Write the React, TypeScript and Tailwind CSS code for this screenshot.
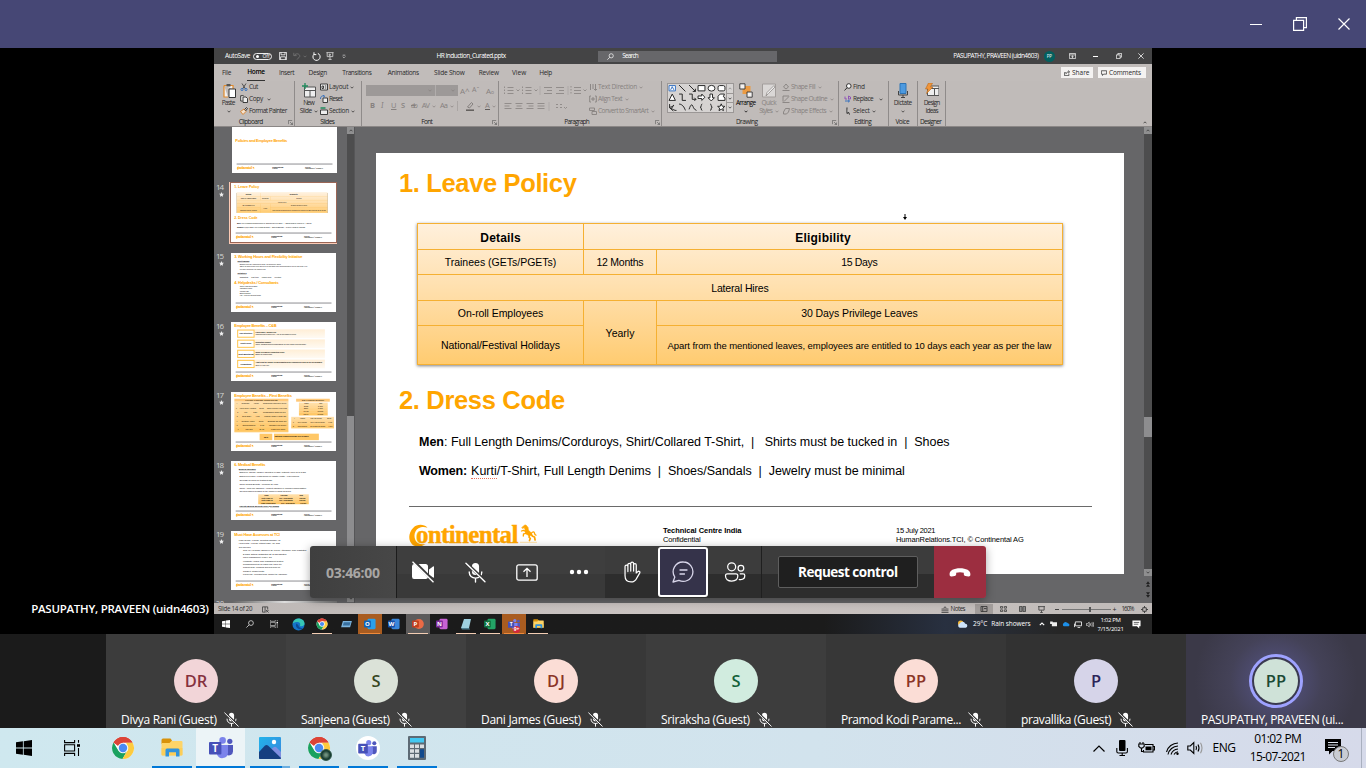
import { useLayoutEffect, useRef, useState, type ReactNode } from "react";

/* Label set to a fixed measure: the tracking is derived from the natural width. */
function Fit({ w, t, className = "" }: { w: number; t: string; className?: string }) {
  const ref = useRef<HTMLSpanElement>(null);
  const [s, setS] = useState<number | null>(null);
  useLayoutEffect(() => {
    if (ref.current && s === null) setS((w - ref.current.offsetWidth) / Math.max(1, t.length - 1));
  }, [s, w, t]);
  return (
    <span
      ref={ref}
      className={"inline-block shrink-0 whitespace-pre " + className}
      style={s === null ? undefined : { letterSpacing: s + "px", marginRight: -s + "px" }}
    >
      {t}
    </span>
  );
}

function Chev({ className = "" }: { className?: string }) {
  return (
    <svg viewBox="0 0 6 4" className={"h-[3px] w-[4px] shrink-0 " + className} fill="none" stroke="currentColor" strokeWidth="1.1">
      <path d="M.8 .8 3 3 5.2 .8" />
    </svg>
  );
}

/* ---------- shared logos ---------- */
function WinLogo({ className, fill = "#000" }: { className: string; fill?: string }) {
  return (
    <svg viewBox="0 0 16 16" className={className} fill={fill}>
      <path d="M0 2.3 6.9 1.3v6.3H0zM7.7 1.2 16 0v7.6H7.7zM0 8.4h6.9v6.3L0 13.7zM7.7 8.4H16V16l-8.3-1.2z" />
    </svg>
  );
}
function Chrome({ className }: { className: string }) {
  return (
    <svg viewBox="0 0 24 24" className={className}>
      <circle cx="12" cy="12" r="11" fill="#fff" />
      <path d="M12 12 2.5 6.5A11 11 0 0 1 21.5 6.5H12z" fill="#dc4437" />
      <path d="M2.5 6.5A11 11 0 0 0 11.5 23L16.2 14.8 12 12 7.5 14.8z" fill="#1aa15f" />
      <path d="M21.5 6.5A11 11 0 0 1 11.5 23l4.9-8.5L17 12l-2-5.5z" fill="#fdcb3f" />
      <path d="M2.5 6.5A11 11 0 0 1 21.5 6.5H12A5.5 5.5 0 0 0 7 10z" fill="#dc4437" />
      <circle cx="12" cy="12" r="5.3" fill="#f4f6f8" />
      <circle cx="12" cy="12" r="4.2" fill="#4a8af4" />
    </svg>
  );
}
function Folder({ className }: { className: string }) {
  return (
    <svg viewBox="0 0 22 20" className={className}>
      <path d="M.5 2Q.5.5 2 .5h7.5l1.5 2V6H.5z" fill="#d8920a" />
      <path d="M.5 5h8l2-2h10q1 0 1 1v12.5q0 1-1 1h-19q-1 0-1-1z" fill="#fdd468" />
      <path d="M.5 10h21v6.5q0 1-1 1h-19q-1 0-1-1z" fill="#fbc94e" opacity=".6" />
      <path d="M4.5 12q0-1.5 1.5-1.5h11q1.5 0 1.5 1.5v6.5h-3.500v-4.300h-7v4.300H4.500z" fill="#3193dc" />
    </svg>
  );
}
function Teams({ className }: { className: string }) {
  return (
    <svg viewBox="0 0 24 22" className={className}>
      <circle cx="20.8" cy="4.3" r="2.6" fill="#4f57bd" />
      <circle cx="13.6" cy="3.4" r="3.3" fill="#7b83eb" />
      <path d="M17.5 8H24v6.5a4 4 0 0 1-6.5 3z" fill="#4f57bd" />
      <path d="M8 8h11v8a5.7 5.7 0 0 1-11 1.5z" fill="#7b83eb" />
      <rect x="0" y="5" width="12.4" height="12.4" rx="1" fill="#4650b8" />
      <text x="6.2" y="14.7" fontSize="10" fontWeight="bold" fill="#fff" textAnchor="middle" fontFamily="Open Sans, sans-serif">T</text>
    </svg>
  );
}
function TaskView({ className, color = "#000" }: { className: string; color?: string }) {
  return (
    <svg viewBox="0 0 16 16" className={className} fill="none" stroke={color} strokeWidth="1.1">
      <path d="M.6 0v2.6h10V0M.6 16v-2.6h10V16M.6 4.8h10v6.2H.6zM14.5 0v2.8M14.5 8v8" />
      <path d="M13 4.2h3v2.600h-3z" fill={color} stroke="none" />
    </svg>
  );
}
function MicOff({ className }: { className: string }) {
  return (
    <svg viewBox="0 0 20 20" className={className} fill="none">
      <rect x="6.6" y="1" width="6.8" height="11.4" rx="3.4" fill="#fff" />
      <path d="M4 9.5c0 3.6 2.6 5.8 6 5.8s6-2.2 6-5.8M10 15.3V19" stroke="#fff" strokeWidth="1.3" strokeLinecap="round" />
      <path d="M1 .9 19.4 18.2" stroke="#3b3b3b" strokeWidth="3" />
      <path d="M.9 1.2 19 18.9" stroke="#fff" strokeWidth="1.3" strokeLinecap="round" />
    </svg>
  );
}

/* ---------- slide ---------- */
function ContinentalLogo() {
  return (
    <div className="flex h-[24px] w-[130px] items-start text-[#ffa500]">
      <svg viewBox="0 0 20 24" className="h-[24px] w-[19px] shrink-0" fill="currentColor">
        <path d="M19.500 3.200C15.500-.8 8.500-.6 4.600 3.200-.8 8.300-1.200 17 3.700 21.100c3.700 3 9.500 2.200 13.800-.8C12.600 21.200 8.600 20 6.800 16.500 4.600 11.800 6 6.200 10 3.900c2.800-1.700 6.300-1.700 9.500-.7z" />
      </svg>
      <Fit w={102} t="ontinental" className="-ml-[12px] -mt-[2px] font-['Liberation_Serif',serif] text-[25px] font-bold leading-[25px] [-webkit-text-stroke:0.4px_#ffa500]" />
      <svg viewBox="0 0 17 19" className="ml-[2px] h-[19px] w-[17px] shrink-0" fill="none" stroke="currentColor" strokeLinecap="round" strokeLinejoin="round">
        <path d="M2 3.400 4.500 1.300 5.800 1 8 3.500 8.200 6l3.300 3.200-2 2.800L5.500 9.500 5 5.500 4.500 3.600 2.700 4.200z" fill="currentColor" strokeWidth=".8" />
        <path d="M6 7.500 3.500 6.300 1.500 7M6.500 9.300 3.500 9.800 3.300 12" strokeWidth="1.300" />
        <path d="M10 10.500 9 13l1.300 1.500-.8 2M11 10l1.500 2.300L14.500 13l.6 3" strokeWidth="1.700" />
        <path d="M11.500 9.200c1.200-2 2.800-1.500 3 0s.6 2 1.500 2" strokeWidth="1.300" />
        <path d="M0 18.300h16.500" strokeWidth=".6" opacity=".6" />
      </svg>
    </div>
  );
}
function SlideFooter({ thumb = false }: { thumb?: boolean }) {
  return (
    <div className="ml-[33px] w-[683px]">
      <div className={thumb ? "h-[7px] bg-[#8c8c90]" : "h-px bg-[#6a6a6a]"} />
      <div className={"flex leading-[9px] " + (thumb ? "mt-[14px] text-[9px]" : "mt-[17px] text-[7.500px]")}>
        <ContinentalLogo />
        <div className="ml-[124px] flex w-[233px] flex-col items-start pt-[2px]">
          <Fit w={78} t="Technical Centre India" className="font-bold" />
          <Fit w={38} t="Confidential" />
        </div>
        <div className="flex flex-col items-start pt-[2px]">
          <Fit w={40} t="15 July 2021" />
          <Fit w={128} t="HumanRelations.TCI, © Continental AG" />
        </div>
      </div>
    </div>
  );
}
function Cell({ w, t, size = "text-[10.500px]", className = "" }: { w: number; t: string; size?: string; className?: string }) {
  return (
    <div className={"flex items-center justify-center border-b border-r border-[#f5b032] pt-[2px] " + size + " " + className}>
      <Fit w={w} t={t} />
    </div>
  );
}
function LeaveSlide({ thumb = false }: { thumb?: boolean }) {
  return (
    <div className="flex h-[421px] w-[748px] flex-col bg-white font-['Liberation_Sans',sans-serif] text-black">
      <div className="ml-[23px] mt-[13px] flex h-[36px] items-center">
        <Fit w={178} t="1. Leave Policy" className="text-[25.500px] font-bold leading-none text-[#ffa500]" />
      </div>
      <div className="ml-[41px] mt-[21px] grid h-[142px] w-[646px] grid-cols-[166px_73px_406px] grid-rows-[26px_25px_26px_25px_39px] border-l border-t border-[#f5b032] bg-linear-to-b from-[#fff0dc] to-[#ffcb6f] shadow-[0_1px_3px_rgba(0,0,0,0.5)]">
        <Cell w={40} t="Details" size="text-[12px]" className="font-bold" />
        <Cell w={55} t="Eligibility" size="text-[12px]" className="col-span-2 font-bold" />
        <Cell w={112} t="Trainees (GETs/PGETs)" />
        <Cell w={47} t="12 Months" />
        <Cell w={37} t="15 Days" />
        <Cell w={58} t="Lateral Hires" className="col-span-3" />
        <Cell w={85} t="On-roll Employees" />
        <Cell w={29} t="Yearly" className="row-span-2" />
        <Cell w={116} t="30 Days Privilege Leaves" />
        <Cell w={119} t="National/Festival Holidays" />
        <Cell w={384} t="Apart from the mentioned leaves, employees are entitled to 10 days each year as per the law" size="text-[9.500px]" />
      </div>
      <div className="ml-[23px] mt-[18px] flex h-[36px] items-center">
        <Fit w={166} t="2. Dress Code" className="text-[25.500px] font-bold leading-none text-[#ffa500]" />
      </div>
      <div className="ml-[43px] mt-[13px] flex h-[20px] items-center text-[12.500px]">
        <Fit w={25} t="Men" className="font-bold" />
        <Fit w={506} t={": Full Length Denims/Corduroys, Shirt/Collared T-Shirt,  |   Shirts must be tucked in  |  Shoes"} />
      </div>
      <div className="ml-[43px] mt-[9px] flex h-[20px] items-center text-[12.500px]">
        <Fit w={48} t="Women:" className="font-bold" />
        <Fit w={26} t="Kurti" className="ml-[4px] h-[15px] border-b border-dotted border-[#e8705a] leading-[15px]" />
        <Fit w={408} t="/T-Shirt, Full Length Denims  |  Shoes/Sandals  |  Jewelry must be minimal" />
      </div>
      <div className="h-[25px] shrink-0" />
      <SlideFooter thumb={thumb} />
    </div>
  );
}

function Plain({ children }: { children?: ReactNode }) {
  return (
    <div className="flex h-[421px] w-[748px] flex-col bg-white pt-[12px] font-['Liberation_Sans',sans-serif] text-black">
      <div className="flex h-[341px] shrink-0 flex-col items-start overflow-hidden pl-[24px]">{children}</div>
      <SlideFooter thumb />
    </div>
  );
}
function H({ w, t, className = "" }: { w: number; t: string; className?: string }) {
  return <Fit w={w} t={t} className={"text-[28px] font-bold leading-[36px] text-[#ffa500] " + className} />;
}
function Lines({ items, className = "" }: { items: string[]; className?: string }) {
  return (
    <div className={"flex flex-col items-start whitespace-pre " + className}>
      {items.map((x) => (
        <span key={x}>{x}</span>
      ))}
    </div>
  );
}

function BenefitTable({ rows, className }: { rows: string[][]; className: string }) {
  return (
    <div className={"flex flex-col justify-around bg-linear-to-b from-[#ffe0ad] to-[#ffc45c] text-[11px] " + className}>
      {rows.map((r) => (
        <div key={r.join()} className="flex justify-around border-b-[2px] border-[#ffdf9f]">
          {r.map((c) => (
            <span key={c}>{c}</span>
          ))}
        </div>
      ))}
    </div>
  );
}

function CompSlide() {
  const rows = [
    ["Pay Structure", "Fixed Salary, Variable Pay", "Components revised every April on the basis of review"],
    ["Joint Policy", "Relocation support", "Travel, transport and accommodation for new employees with family"],
    ["Joint Monitoring", "Salary reviews are conducted yearly", "Based on market data"],
    ["Promotions", "Apart from the annual review promotions are considered yearly as per performance", "Twice a year cycle"],
  ];
  return (
    <Plain>
      <H w={300} t="Employee Benefits – C&B" />
      <div className="ml-[20px] mt-[4px] flex w-[625px] flex-col gap-[10px]">
        {rows.map((r) => (
          <div key={r[0]} className="flex h-[62px] items-center bg-linear-to-b from-[#ffeed6] to-[#fffaf2]">
            <div className="flex h-[58px] w-[124px] shrink-0 items-center justify-center border-[7px] border-[#ffc54d] bg-white text-[14px] font-bold">{r[0]}</div>
            <div className="flex flex-col pl-[6px] text-[12px] leading-[15px]">
              <b className="whitespace-nowrap">{r[1]}</b>
              <span>{r[2]}</span>
            </div>
          </div>
        ))}
      </div>
    </Plain>
  );
}
function FlexiSlide() {
  return (
    <Plain>
      <H w={410} t="Employee Benefits – Flexi Benefits" className="leading-[34px]" />
      <div className="flex gap-[20px]">
        <div className="w-[385px]">
          <div className="bg-[#ffc878] text-center text-[17px] leading-[21px]">Flexible Package Components</div>
          <BenefitTable
            className="h-[218px]"
            rows={[
              ["#", "Component", "Amount", "Remarks and conditions of payout"],
              ["1", "Leave Travel Allowance", "15,000", "Twice in a block of four years"],
              ["2", "Fuel", "3,200", "Reimbursement against fuel bills"],
              ["3", "Driver Salary", "9,000", "Company leased or owned cars"],
              ["4", "Telephone / Mobile", "12,000", "Broadband and mobile bills"],
              ["5", "Children Education", "2,400", "Maximum of two children"],
              ["6", "Meal Card", "26,400", "Loaded every month"],
            ]}
          />
        </div>
        <div className="flex w-[310px] flex-col">
          <div className="ml-[35px] w-[240px] bg-[#ffc878] text-center text-[17px] leading-[21px]">Car Leasing Scheme</div>
          <BenefitTable className="ml-[55px] mt-[6px] h-[92px] w-[205px]" rows={[["Grade", "Limit"], ["E1-E2", "5 Lakh"], ["E3-E4", "8 Lakh"], ["M1-M2", "12 Lakh"], ["M3-M4", "18 Lakh"]]} />
          <BenefitTable className="mt-[10px] h-[82px] w-[305px]" rows={[["#", "Vehicle", "Fuel (per month)", "Driver"], ["1", "Up to 1600cc", "Rs. 8,400 per month", "9,000"], ["2", "Above 1600cc", "Rs. 11,200 per month", "9,000"]]} />
        </div>
      </div>
      <div className="ml-[180px] mt-[10px] flex items-center gap-[12px] text-[14px] font-bold">
        <div className="flex h-[46px] w-[90px] items-center justify-center bg-[#ffc766]">NPS</div>
        <div className="flex h-[46px] w-[320px] items-center bg-[#ffc766] pl-[6px] text-[13px]">National Pension Scheme 10% of basic</div>
      </div>
    </Plain>
  );
}
const thumbs: { n: string; el: ReactNode }[] = [
  { n: "14", el: <LeaveSlide thumb /> },
  {
    n: "15",
    el: (
      <Plain>
        <H w={485} t="3. Working Hours and Flexibility Initiative" />
        <Lines className="ml-[22px] text-[14px] font-bold underline" items={["Shift timings"]} />
        <Lines className="ml-[38px] mt-[3px] text-[13px] leading-[18px]" items={["Employees are required to work 45 hours per week", "Office is open from 7:00 am to 8:00 pm with core hours between 10:00 am and 4:00", "Flexible hours for all employees"]} />
        <Lines className="ml-[22px] mt-[8px] text-[14px] font-bold underline" items={["Initiatives"]} />
        <Lines className="ml-[38px] mt-[9px] text-[13px]" items={["Sabbatical      Part-time      Mobile work      Flextime"]} />
        <H w={315} t="4. Helpdesks / Consultants" className="mt-[8px]" />
        <Lines className="ml-[38px] text-[13px] leading-[17px]" items={["Travel and Relocation", "Insurance desk", "Income Tax", "Bank support", "HR – Payroll support desk"]} />
      </Plain>
    ),
  },
  { n: "16", el: <CompSlide /> },
  { n: "17", el: <FlexiSlide /> },
  {
    n: "18",
    el: (
      <Plain>
        <H w={222} t="6. Medical Benefits" />
        <Lines className="ml-[32px] text-[14px] font-bold underline" items={["Medical Insurance"]} />
        <Lines
          className="ml-[36px] mt-[2px] text-[14px] leading-[27px]"
          items={["Employee, spouse, children, parents or in-laws : Maternity cover up to 5 lakh", "Employee's Family Health Check-up (Master Health) - 7,500 Rupees", "Coverage for Covid-19 treatment also", "Group Medical Benefits – Premium 15 years", "Group – Term Life Insurance, Accident Insurance & Workmen Compensation", "The sum insured is based on the employee grade as below"]}
        />
        <BenefitTable className="ml-[170px] mt-[4px] h-[70px] w-[360px] shrink-0 font-bold" rows={[["Grade", "Coverage", "Sum"], ["Up to Grade 10", "Self + Dependents", "3,00,000"], ["Up to Grade 12", "Self + Dependents", "5,00,000"], ["Grade 13 and above", "Self + Dependents", "7,00,000"]]} />
        <Lines className="ml-[36px] mt-[7px] text-[14px] font-bold underline" items={["Parents Medical Benefits cover per annum"]} />
      </Plain>
    ),
  },
  {
    n: "19",
    el: (
      <Plain>
        <H w={325} t="Must Have Accesses at TCI" />
        <Lines className="ml-[32px] mt-[4px] text-[14px] leading-[25px]" items={["Legic ID card : IT Desk, Reporting Manager, HR", "HRIS Portal : IT Team, Intranet Page, HR, CSC", "Self-Services"]} />
        <Lines
          className="ml-[62px] text-[14px] leading-[24.500px]"
          items={["CPC, My HR Space, Employee ID, Payroll, Attendance, Time registration", "E-mails, Outlook, Distribution list, E-mail signature", "Travel Management, Webex, CTI", "Workmate : Mobile Time Management System", "Reimbursement for all employees, travel etc.", "Support desk : helpdesk and new joiner kit", "ConNext, Intranet Portal", "Payroll link : Provident fund, income tax, insurance"]}
        />
      </Plain>
    ),
  },
];

function ThumbPane() {
  return (
    <div className="flex h-[476px] w-[133px] shrink-0 flex-col overflow-hidden font-['Open_Sans',sans-serif] text-[8px] text-[#d6d6d6]">
      <div className="ml-[17.500px] flex h-[46px] w-[105px] shrink-0 items-end overflow-hidden bg-white">
        <div className="h-[59px] w-[105px]">
          <div className="origin-top-left scale-[0.14035]">
            <Plain>
              <H w={370} t="Policies and Employee Benefits" className="mt-[160px]" />
            </Plain>
          </div>
        </div>
      </div>
      <div className="h-[8.500px] shrink-0" />
      {thumbs.map((t, i) => (
        <div key={t.n} className="flex h-[69.500px] shrink-0">
          <div className="flex w-[15px] shrink-0 flex-col items-start pl-[2px] leading-[9px]">
            <Fit w={8} t={t.n} />
            <svg viewBox="0 0 10 10" className="ml-[3px] mt-[1px] h-[5px] w-[5px]" fill="#eee">
              <path d="m5 0 1.500 3.300 3.500.4-2.600 2.400.7 3.600L5 7.900 1.900 9.700l.7-3.600L0 3.700l3.500-.4z" />
            </svg>
          </div>
          <div className={"flex h-[62px] w-[108px] shrink-0 items-center justify-center " + (i === 0 ? "border border-[#fbc9b4] bg-[#f6dcd0] p-px" : "")}>
            <div className={"h-[59px] w-[105px] shrink-0 overflow-hidden bg-white " + (i === 0 ? "ring-1 ring-[#9a6656]" : "")}>
              <div className="h-[421px] w-[748px] origin-top-left scale-[0.14035]">{t.el}</div>
            </div>
          </div>
        </div>
      ))}
      <div className="flex shrink-0">
        <div className="w-[17.500px] shrink-0 pl-[2px] leading-[8px]"><Fit w={8} t="20" className="text-[7px]" /></div>
        <div className="mt-[2px] h-[8px] w-[105px] bg-linear-to-r from-[#666] via-[#ddd] to-[#777]" />
      </div>
    </div>
  );
}

function ScrollBar({ className, top, size, arrows }: { className: string; top: string; size: string; arrows: boolean }) {
  const btn = "flex h-[7px] w-full shrink-0 items-center justify-center bg-[#8f8f90] text-[#333]";
  return (
    <div className={"flex shrink-0 flex-col bg-[#4d4d4e] " + className}>
      <div className={btn}><Chev className="rotate-180" /></div>
      <div className={top} />
      <div className={"bg-[#8d8d8f] " + size} />
      <div className="grow" />
      <div className={btn}><Chev /></div>
      {arrows && (
        <div className="flex h-[27px] shrink-0 flex-col items-center justify-evenly bg-[#666668] text-[#222]">
          <svg viewBox="0 0 6 8" className="h-[6px] w-[4px]"><path d="M0 4 3 0l3 4zM0 8l3-4 3 4z" fill="currentColor" /></svg>
          <svg viewBox="0 0 6 8" className="h-[6px] w-[4px]"><path d="M0 0h6L3 4zM0 4h6L3 8z" fill="currentColor" /></svg>
        </div>
      )}
    </div>
  );
}

/* ---------- PowerPoint window ---------- */
function PptTitle() {
  return (
    <div className="flex h-[16px] items-center bg-[#444445] pl-[11px] text-white">
      <Fit w={25} t="AutoSave" />
      <div className="ml-[3px] flex h-[7px] w-[19px] shrink-0 items-center rounded-full border border-white/90 pl-[2px] text-[5px] leading-none">
        <span className="h-[3px] w-[3px] rounded-full bg-white" />
        <span className="ml-[3px]">Off</span>
      </div>
      <svg viewBox="0 0 10 10" className="ml-[7px] h-[8px] w-[8px]" fill="none" stroke="#fff" strokeWidth="1"><path d="M.5.5h9v9h-9zM2.500.5v3h5v-3M2 9.500V6h6v3.500" /></svg>
      <svg viewBox="0 0 10 10" className="ml-[6px] h-[8px] w-[8px]" fill="none" stroke="#777" strokeWidth="1"><path d="M1 1v3.500h3.500M1.500 4.200C4 1 8.500 2 8.500 5.500L5 9.500" /></svg>
      <Chev className="ml-[2px] text-[#777]" />
      <svg viewBox="0 0 10 10" className="ml-[5px] h-[9px] w-[9px]" fill="none" stroke="#fff" strokeWidth="1.100"><path d="M6.500 1.600A4 4 0 1 1 2.200 2.500M2.200.3v2.600h2.600" /></svg>
      <svg viewBox="0 0 10 10" className="ml-[5px] h-[8px] w-[8px]" fill="none" stroke="#ddd" strokeWidth="1"><path d="M.5.8h9M1.500.8v5h7v-5M5 5.800v3M3 9.300h4M4 2.500l2 1-2 1z" /></svg>
      <svg viewBox="0 0 6 6" className="ml-[8px] h-[5px] w-[4px]" fill="none" stroke="#ddd" strokeWidth="1"><path d="M1 1h4M1 3l2 2 2-2" /></svg>
      <Fit w={70} t="HR Induction_Curated.pptx" className="ml-[90px]" />
      <div className="ml-[92px] flex h-[11px] w-[179px] items-center bg-[#67676a] pl-[9px]">
        <svg viewBox="0 0 10 10" className="h-[7px] w-[7px]" fill="none" stroke="#fff" strokeWidth="1"><circle cx="6" cy="4" r="3" /><path d="M4 6.200.5 9.500" /></svg>
        <Fit w={17} t="Search" className="ml-[8px]" />
      </div>
      <Fit w={86} t="PASUPATHY, PRAVEEN (uidn4603)" className="ml-[176px]" />
      <div className="ml-[5px] flex h-[11px] w-[11px] shrink-0 items-center justify-center rounded-full bg-[#03605f] text-[4.500px]">PP</div>
      <svg viewBox="0 0 10 8" className="ml-[14px] h-[6px] w-[7px]" fill="none" stroke="#fff" strokeWidth="1"><path d="M.5.5h9v7h-9zM.5 2.500h9M5 7V4M3.500 5 5 3.800 6.500 5" /></svg>
      <div className="ml-[17px] h-px w-[5px] bg-white" />
      <svg viewBox="0 0 8 8" className="ml-[18px] h-[6px] w-[6px]" fill="none" stroke="#fff" strokeWidth="1"><path d="M.5 2.500h5v5h-5zM2.500 2.500v-2h5v5h-2" /></svg>
      <svg viewBox="0 0 8 8" className="ml-[16px] h-[6px] w-[6px]" fill="none" stroke="#fff" strokeWidth="1"><path d="m.5.500 7 7M7.500.5l-7 7" /></svg>
    </div>
  );
}

function PptTabs() {
  return (
    <div className="flex h-[17px] items-center bg-[#c1bcba] pl-[8px] text-[#2a2a2a]">
      <Fit w={9} t="File" />
      <div className="ml-[16px] flex h-full flex-col items-start justify-center border-b-[1.500px] border-[#333] pt-[1px] font-semibold leading-none text-black"><Fit w={18} t="Home" /></div>
      <Fit w={16} t="Insert" className="ml-[14px]" />
      <Fit w={19} t="Design" className="ml-[14px]" />
      <Fit w={30} t="Transitions" className="ml-[15px]" />
      <Fit w={31} t="Animations" className="ml-[16px]" />
      <Fit w={31} t="Slide Show" className="ml-[15px]" />
      <Fit w={20} t="Review" className="ml-[14px]" />
      <Fit w={14} t="View" className="ml-[13px]" />
      <Fit w={13} t="Help" className="ml-[13px]" />
      <div className="ml-auto mr-[6px] flex gap-[5px]">
        <div className="flex h-[11px] w-[32px] items-center gap-[2px] bg-[#f4f2f1] pl-[3px]">
          <svg viewBox="0 0 8 8" className="h-[6px] w-[6px]" fill="none" stroke="#333" strokeWidth="1"><path d="M2.500 3.500h-2v4h6V5M2.500 5.500C3 3 4.500 2.500 7 2.500M5.500.7l2 1.800-2 1.800" /></svg>
          <Fit w={17} t="Share" />
        </div>
        <div className="flex h-[11px] w-[48px] items-center gap-[2px] bg-[#f4f2f1] pl-[3px]">
          <svg viewBox="0 0 8 8" className="h-[6px] w-[6px]" fill="none" stroke="#333" strokeWidth="1"><path d="M.5 1h7v4.500h-4L2 7.300V5.500H.5z" /></svg>
          <Fit w={32} t="Comments" />
        </div>
      </div>
    </div>
  );
}

function Launcher() {
  return (
    <svg viewBox="0 0 6 6" className="h-[5px] w-[5px]" fill="none" stroke="#666" strokeWidth=".9"><path d="M.5 5V.5H5M2.500 2.500 5.500 5.500M5.500 3v2.500H3" /></svg>
  );
}
function Group({ label, lw, width, launcher = false, children }: { label: string; lw: number; width: string; launcher?: boolean; children: ReactNode }) {
  return (
    <div className={"flex h-full shrink-0 flex-col border-r border-[#8f8b8a] " + width}>
      <div className="flex h-[36px]">{children}</div>
      <div className="flex h-[9px] items-center pr-[1px] pt-[2px] leading-none text-[#222]">
        <div className="flex grow justify-center"><Fit w={lw} t={label} /></div>
        {launcher && <Launcher />}
      </div>
    </div>
  );
}
function Cmd({ icon, w, t, chev = false, chevGap = "ml-[2px]" }: { icon: ReactNode; w: number; t: string; chev?: boolean; chevGap?: string }) {
  return (
    <div className="flex h-[12px] items-center leading-none">
      <svg viewBox="0 0 8 8" className="mr-[1px] h-[8px] w-[8px] shrink-0" fill="none" stroke="currentColor" strokeWidth=".9">{icon}</svg>
      <Fit w={w} t={t} />
      {chev && <Chev className={chevGap} />}
    </div>
  );
}
function Big({ icon, l1, w1, l2, w2, chev = false, className = "" }: { icon: ReactNode; l1: string; w1: number; l2?: string; w2?: number; chev?: boolean; className?: string }) {
  return (
    <div className={"flex shrink-0 flex-col items-center pt-[2px] leading-none " + className}>
      <svg viewBox="0 0 14 15" className="h-[15px] w-[14px]">{icon}</svg>
      <div className="mt-[1px] flex h-[8px] items-center"><Fit w={w1} t={l1} /></div>
      <div className="flex h-[8px] items-center gap-[2px]">
        {l2 && <Fit w={w2 ?? 10} t={l2} />}
        {chev && <Chev />}
      </div>
    </div>
  );
}

const shapeIcons = [
  "M1 1.500h6v5H1zM2.500 5.500 4 2.500l1.500 3", "m1 1 6 6", "m1 1 6 6M7 4.500V7H4.500", "M1 1.500h6.500v5H1z", "M1 4a3 2.500 0 1 0 6.500 0A3 2.500 0 1 0 1 4z", "M2.500 1.500h3.500q1.500 0 1.500 1.500v2q0 1.500-1.500 1.500H2.500Q1 6.500 1 5V3q0-1.500 1.500-1.500z",
  "M4 1 7 7H1z", "M1 1h3v6h3.500", "M1 1h3v5h3.500M6 4.500 7.500 6 6 7.500", "M1 2.800h3.500V1l3 3-3 3V5.200H1z", "M2.800 1v3.500H1l3 3 3-3H5.200V1z", "M1 7V3l2-2h4L6 3.500l1.500 1V7z",
  "M1.500 1v3c2 0 3-1 4-2L3 5.500c2 0 3 2 5 1.500M1 4l4 3.500", "M1 1c3 0 5 3 6 6", "M1 6c1-3 2-5 3-4s1 4 4 5", "M5 1Q4 1 4 2.500T3 4q1 0 1 1.500T5 7", "M3 1q1 0 1 1.500T5 4Q4 4 4 5.500T3 7", "m4 .8.9 2.200 2.500.2-1.900 1.600.6 2.400L4 5.900 1.900 7.200l.6-2.400L.6 3.200 3.100 3z",
];

function Ribbon() {
  return (
    <div className="flex h-[46px] border-b border-[#8b8786] bg-[#c0bbb9] text-[#2d2d2d]">
      <Group label="Clipboard" lw={25} width="w-[81px]" launcher>
        <Big className="ml-[6px] w-[17px]" l1="Paste" w1={14} chev icon={<g><path d="M2 2.500h9V6M6 14H2V2.500" fill="#f2efee" stroke="#e08a2c" strokeWidth="1.200" /><path d="M4.500 1h4v2.500h-4z" fill="#555" /><path d="M7 6h6.500v8.500H7z" fill="#fff" stroke="#333" /></g>} />
        <div className="ml-[3px] flex flex-col">
          <Cmd w={9} t="Cut" icon={<g stroke="#2e6dc0"><path d="M2 .5 5.500 6M6 .5 2.500 6" stroke="#444" /><circle cx="2" cy="6.500" r="1.100" /><circle cx="6" cy="6.500" r="1.100" /></g>} />
          <Cmd w={14} t="Copy" chev chevGap="ml-[4px]" icon={<path d="M2.500 6H.7V.7h3M3 2h3l1.500 1.500v4H3z" fill="#eee" />} />
          <Cmd w={38} t="Format Painter" icon={<g><path d="M.5 4.500 4 2l2 2.500-3 3z" fill="#f3e2cf" stroke="#d98029" /><path d="m4.500 2.500 2-2 1 1-2 2.500" /></g>} />
        </div>
      </Group>
      <Group label="Slides" lw={15} width="w-[67px]">
        <Big className="ml-[5px] w-[18px]" l1="New" w1={12} l2="Slide" w2={12} chev icon={<g><path d="M2.500 4h11v10h-11z" fill="#eee" stroke="#555" /><path d="M2.500 7.500h11M8 7.500V14" stroke="#555" /><path d="M3 0v6M0 3h6" stroke="#1f8a5c" strokeWidth="1.300" /></g>} />
        <div className="ml-[2px] flex flex-col">
          <Cmd w={19} t="Layout" chev icon={<g><path d="M.5 1h7v6h-7z" fill="#eee" /><path d="M2 3h1.500v2.500H2zM4.800 3h1.500M4.800 5h1.500" /></g>} />
          <Cmd w={14} t="Reset" icon={<g><path d="M3 3h4.500v4.500H3z" fill="#eee" /><path d="M.5 4c0-3 2-3.500 4-3M3 .3l1.500.8-1 1.500" stroke="#2e6dc0" /></g>} />
          <Cmd w={20} t="Section" chev icon={<g><path d="M.5 3h7v4.500h-7z" fill="#eee" /><path d="M.5 1h5" stroke="#1f8a5c" strokeWidth="1.500" /></g>} />
        </div>
      </Group>
      <Group label="Font" lw={12} width="w-[137px]" launcher>
        <div className="flex grow flex-col pl-[4px] text-[#86817f]">
          <div className="mt-[4px] flex h-[11px] items-center">
            <div className="flex h-full w-[70px] items-center justify-end border-r border-[#b1adac] bg-[#9d9998] pr-[3px]"><Chev /></div>
            <div className="flex h-full w-[22px] items-center justify-end bg-[#9d9998] pr-[3px]"><Chev /></div>
            <span className="ml-[2px] w-[12px] whitespace-nowrap text-[8px]">A^</span>
            <span className="w-[14px] text-[7px]">Aˇ</span>
            <span className="text-[8px]">A<span className="text-[5px]">o</span></span>
          </div>
          <div className="mt-[4px] flex h-[12px] items-center pl-[4px] text-[7.500px]">
            <b className="w-[11px]">B</b>
            <i className="w-[10px] font-serif">I</i>
            <span className="w-[10px] underline">U</span>
            <span className="w-[10px] font-semibold">S</span>
            <Fit w={7} t="ab" className="line-through" />
            <Fit w={8} t="AV" className="ml-[4px]" />
            <Chev className="ml-[2px]" />
            <Fit w={8} t="Aa" className="ml-[4px]" />
            <Chev className="ml-[2px]" />
            <span className="ml-[3px] h-[10px] w-px bg-[#aaa5a3]" />
            <svg viewBox="0 0 8 9" className="ml-[8px] h-[9px] w-[8px]" fill="none" stroke="currentColor"><path d="m1.500 5 4-4.500L7 2 3.500 6z" /><path d="M0 8.200h8" stroke="#605c5a" strokeWidth="1.500" /></svg>
            <Chev className="ml-[3px]" />
            <span className="ml-[4px] border-b-[1.500px] border-[#605c5a] leading-[7px]">A</span>
            <Chev className="ml-[2px]" />
          </div>
        </div>
      </Group>
      <Group label="Paragraph" lw={26} width="w-[163px]" launcher>
        <svg viewBox="0 0 90 36" className="h-[36px] w-[90px] shrink-0" fill="none" stroke="#928d8b" strokeWidth="1">
          <path d="M8.500 6.500h6M8.500 9.500h6M8.500 12.500h6M26.500 6.500h6M26.500 9.500h6M26.500 12.500h6M45 6.500h8M48 9.500h5M45 12.500h8M57 6.500h8M60 9.500h5M57 12.500h8M75 6.500h7M75 9.500h7M75 12.500h7" />
          <path d="M5.500 5.500v8M23.500 5.500v8M72 5v9" strokeDasharray="1.500 1.500" />
          <path d="m17.500 8.500 1.500 1.500 1.500-1.500M35.500 8.500 37 10l1.500-1.500M84.500 8.500 86 10l1.500-1.500M65 26l1.500 1.500L68 26" />
          <path d="M5.500 22.500h7M5.500 25h5M5.500 27.500h7M16.500 22.500h7M17.500 25h5M16.500 27.500h7M27.500 22.500h7M29.500 25h5M27.500 27.500h7M38.500 22.500h7M38.500 25h7M38.500 27.500h7M57 23.500h2M61 23.500h2M57 26.500h2M61 26.500h2" />
          <path d="M41 5v9M69 5v9M50 21v9" stroke="#aaa5a3" strokeWidth=".8" />
        </svg>
        <div className="flex flex-col text-[#86817f]">
          <Cmd w={39} t="Text Direction" chev icon={<path d="M1.500 1v6M4 1v5M6.500 1v6M5 6l1.500 1.500L8 6" />} />
          <Cmd w={25} t="Align Text" chev icon={<path d="M2 1H.7v6H2M6 1h1.300v6H6M2 4h4M4 2v4" />} />
          <Cmd w={51} t="Convert to SmartArt" chev icon={<path d="M.5 1h5v2.500h-5zM3 4.500h4.500v3H3z" />} />
        </div>
      </Group>
      <Group label="Drawing" lw={22} width="w-[177px]" launcher>
        <div className="ml-[5px] mt-[2px] flex h-[30px] w-[67px] shrink-0 border border-[#9b9796] bg-[#d6d3d2]">
          <div className="grid w-[59px] grid-cols-6 grid-rows-3 place-items-center">
            {shapeIcons.map((d, i) => (
              <svg key={d} viewBox="0 0 8.500 8.500" className="h-[9px] w-[9px]" fill={i === 0 || (i > 2 && i < 7) || i === 9 || i === 10 || i === 11 || i === 17 ? "#fff" : "none"} stroke={i === 0 ? "#2e6dc0" : "#222"} strokeWidth=".9"><path d={d} /></svg>
            ))}
          </div>
          <div className="flex w-[7px] flex-col divide-y divide-[#9b9796] border-l border-[#9b9796]">
            <div className="flex grow items-center justify-center"><Chev className="rotate-180 text-[#888]" /></div>
            <div className="flex grow items-center justify-center"><Chev /></div>
            <div className="flex grow items-center justify-center"><Chev /></div>
          </div>
        </div>
        <Big className="ml-[2px] w-[20px] text-black" l1="Arrange" w1={20} chev icon={<g><path d="M3.500 3h8v8h-8z" fill="#eb9b43" /><path d="M.8.800H6V6H.8zM8 9h5.200v5.200H8z" fill="#f4f2f1" stroke="#333" strokeWidth=".9" /></g>} />
        <Big className="ml-[3px] w-[20px] text-[#86817f]" l1="Quick" w1={15} l2="Styles" w2={14} chev icon={<g><path d="M.5 1h13v13H.5z" fill="#dad7d6" stroke="#a29d9b" /><path d="M13 4 6.500 10.500 4 13l1-3.500 7-7z" fill="#eee" stroke="#908b89" strokeWidth=".8" /></g>} />
        <div className="ml-[3px] flex flex-col text-[#86817f]">
          <Cmd w={25} t="Shape Fill" chev icon={<path d="m1.500 4 2.500-3 2.500 3L4 6zM.5 7.500h7" />} />
          <Cmd w={37} t="Shape Outline" chev icon={<path d="M7 1H1v5.500M2 6.500l5-5M.5 7.500h7" />} />
          <Cmd w={36} t="Shape Effects" chev icon={<path d="m1.500 5 2-3.500h4l-1 3.500-2 2h-3z" />} />
        </div>
      </Group>
      <Group label="Editing" lw={18} width="w-[50px]">
        <div className="ml-[5px] flex flex-col">
          <Cmd w={12} t="Find" icon={<g><circle cx="4.800" cy="3" r="2.300" fill="#fff" stroke="#222" /><path d="m3 4.800-2.500 2.700" stroke="#222" /></g>} />
          <Cmd w={21} t="Replace" chev chevGap="ml-[5px]" icon={<g><path d="M1 1.500v2.500h2M4.500 1v3h2v-2z" stroke="#8a4bb5" /><path d="M1 6h4.500M4 4.700 5.500 6 4 7.300" stroke="#2e6dc0" /></g>} />
          <Cmd w={17} t="Select" chev icon={<path d="M3 .5v6l1.500-1.300L5.500 7.500" stroke="#111" fill="#fff" />} />
        </div>
      </Group>
      <Group label="Voice" lw={14} width="w-[29px]">
        <Big className="w-[28px]" l1="Dictate" w1={18} chev icon={<g><path d="M4 .5h6v10H4z" fill="#4d9ae0" stroke="#2f74b5" /><path d="M2.500 8v4h9V8M7 12v2.500M5 14.500h4" fill="none" stroke="#444" /></g>} />
      </Group>
      <Group label="Designer" lw={22} width="w-[28px]">
        <Big className="w-[28px]" l1="Design" w1={17} l2="Ideas" w2={13} icon={<g><path d="M2.500 3h11.500v9.500H2.500z" fill="#eee" stroke="#555" /><path d="M5 5.500h9M9.500 5.500v7" stroke="#555" /><path d="M3.500 0h4L5.500 4h2.500L1.500 10.500 3 6H.5z" fill="#f0953a" stroke="#b96a1c" strokeWidth=".6" /></g>} />
      </Group>
      <div className="flex grow items-end justify-end pb-[2px] pr-[5px]"><Chev className="rotate-180" /></div>
    </div>
  );
}

function StatusBar() {
  return (
    <div className="flex h-[11px] shrink-0 items-center bg-linear-to-r from-[#bdb8b6] via-[#cbc4c2] to-[#c0bbb9] pl-[4px] pt-[1px] text-[6.200px] leading-none text-[#2c2c2c]">
      <Fit w={35} t="Slide 14 of 20" />
      <svg viewBox="0 0 8 8" className="ml-[9px] h-[7px] w-[7px]" fill="none" stroke="#444"><path d="M.5 1h3v6h-3zM3.500 1h3v3M4.500 4.500 7.500 7.500M7.500 4.500 4.500 7.500" /></svg>
      <svg viewBox="0 0 8 8" className="ml-[672px] h-[7px] w-[8px]" fill="none" stroke="#444"><path d="M0 3.500h8M0 5.500h8M0 7.500h8M2.500 2.500 4 .8l1.500 1.700" /></svg>
      <Fit w={15} t="Notes" className="ml-[2px]" />
      <div className="ml-[9px] flex h-full w-[18px] items-center justify-center bg-[#a29d9b]">
        <svg viewBox="0 0 8 7" className="h-[6px] w-[8px]" fill="none" stroke="#333"><path d="M.5.5h7v6h-7zM2.500.5v6M4 3h3" /></svg>
      </div>
      <svg viewBox="0 0 8 7" className="ml-[7px] h-[6px] w-[7px]" fill="none" stroke="#444"><path d="M.5.5h2.500v2H.5zM5 .5h2.500v2H5zM.5 4.500h2.500v2H.5zM5 4.500h2.500v2H5z" /></svg>
      <svg viewBox="0 0 8 7" className="ml-[12px] h-[6px] w-[7px]" fill="#888" stroke="#444"><path d="M.5.5h3v6h-3zM4.500.5h3v6h-3z" /></svg>
      <svg viewBox="0 0 8 8" className="ml-[12px] h-[7px] w-[7px]" fill="none" stroke="#444"><path d="M0 .7h8M1 .7v4h6v-4M4 5v2.500M2.500 7.500h3" /></svg>
      <span className="ml-[10px] h-px w-[4px] bg-[#444]" />
      <div className="ml-[3px] flex h-[6px] w-[49px] items-center">
        <span className="h-px w-[27px] bg-[#777]" />
        <span className="h-[5px] w-[2px] bg-[#555]" />
        <span className="h-px w-[20px] bg-[#777]" />
      </div>
      <span className="ml-[2px] text-[7px]">+</span>
      <Fit w={13} t="160%" className="ml-[5px]" />
      <svg viewBox="0 0 8 8" className="ml-[7px] h-[7px] w-[7px]" fill="none" stroke="#333"><path d="M2 2h4v4H2zM4 0v2M4 6v2M0 4h2M6 4h2" /></svg>
    </div>
  );
}

function OfficeIcon({ l, c, d }: { l: string; c: string; d: string }) {
  return (
    <svg viewBox="0 0 14 14" className="h-[12px] w-[12px]">
      <rect x="4" y="1" width="9.500" height="12" rx="1.500" fill={c} />
      <rect x="0" y="3" width="8" height="8" rx="1" fill={d} />
      <text x="4" y="9.400" fontSize="7" fontWeight="bold" fill="#fff" textAnchor="middle" fontFamily="Open Sans, sans-serif">{l}</text>
    </svg>
  );
}
function InnerTaskbar() {
  const cells: { k: string; bg?: string; line?: string; el: ReactNode }[] = [
    { k: "win", el: <WinLogo className="h-[8px] w-[8px]" fill="#fff" /> },
    { k: "find", el: <svg viewBox="0 0 10 10" className="h-[8px] w-[8px]" fill="none" stroke="#ddd"><circle cx="6.200" cy="3.800" r="3" /><path d="M4 6 .5 9.500" /></svg> },
    { k: "view", el: <TaskView className="h-[8px] w-[8px]" color="#eee" /> },
    { k: "edge", el: <svg viewBox="0 0 14 14" className="h-[13px] w-[13px]"><circle cx="7" cy="7" r="6.500" fill="#1573c8" /><path d="M.6 6C1.500 2.500 4 .5 7 .5c4 0 6.500 2.500 6.500 5.500 0 2-1.500 3-3.500 3-1 0-1.800-.4-1.300-1.200C9.500 6 8 4.300 6 4.300 3.500 4.300 1.500 5 .6 6z" fill="#37c6b4" /><path d="M5 6c-2 2 0 6 4 6 1.500 0 3-.6 3.600-1.300C11 11.500 7 10.500 7 8z" fill="#0d4a94" /></svg> },
    { k: "chrome", line: "bg-[#f3cdb3]", el: <Chrome className="h-[12px] w-[12px]" /> },
    { k: "rdp", el: <svg viewBox="0 0 12 10" className="h-[9px] w-[11px]"><path d="M2 1h10l-2 7H0z" fill="#7db4dd" /><path d="M3 2.500h7.500l-1 3.500H2z" fill="#376f9f" /></svg> },
    { k: "outlook", bg: "bg-[#a95c20]", line: "bg-[#ef8a3a]", el: <OfficeIcon l="O" c="#2aa0ea" d="#0f62b8" /> },
    { k: "word", el: <OfficeIcon l="W" c="#3a86da" d="#1650ab" /> },
    { k: "ppt", bg: "bg-[#5d5b5b]", line: "bg-[#f3cdb3]", el: <svg viewBox="0 0 14 14" className="h-[12px] w-[12px]"><circle cx="8" cy="7" r="5.800" fill="#ea6a45" /><rect x="0" y="3" width="8" height="8" rx="1" fill="#c23f1e" /><text x="4" y="9.400" fontSize="7" fontWeight="bold" fill="#fff" textAnchor="middle" fontFamily="Open Sans, sans-serif">P</text></svg> },
    { k: "one", el: <OfficeIcon l="N" c="#c862d4" d="#7f2a9c" /> },
    { k: "note", line: "bg-[#f3cdb3]", el: <svg viewBox="0 0 12 12" className="h-[12px] w-[12px]"><path d="M4 1h7l-2 9H1z" fill="#9fd0df" /><path d="m1 10 8 0 1 1.500H2z" fill="#4f7f90" /></svg> },
    { k: "excel", line: "bg-[#f3cdb3]", el: <OfficeIcon l="X" c="#23a366" d="#107340" /> },
    { k: "teams", bg: "bg-[#a95c20]", line: "bg-[#ef8a3a]", el: <div className="relative"><Teams className="h-[11px] w-[12px]" /><span className="absolute -bottom-[3px] left-[5px] flex h-[7px] w-[7px] items-center justify-center rounded-full bg-[#d3273b] text-[5px] font-bold text-white">9+</span></div> },
    { k: "files", line: "bg-[#f3cdb3]", el: <Folder className="h-[10px] w-[11px]" /> },
  ];
  return (
    <div className="flex h-[20px] shrink-0 items-center bg-linear-to-r from-[#1b1b1b] from-65% via-[#283040] via-78% to-[#262626] to-90% text-[6.500px] leading-none text-white">
      {cells.map((c) => (
        <div key={c.k} className={"flex h-full w-[24px] shrink-0 flex-col items-center " + (c.bg ?? "")}>
          <div className="flex grow items-center pt-[1px]">{c.el}</div>
          <div className={"h-px w-[20px] " + (c.line ?? "")} />
        </div>
      ))}
      <svg viewBox="0 0 12 10" className="ml-[407px] h-[9px] w-[11px] shrink-0"><circle cx="4" cy="3.500" r="3" fill="#f6b93b" /><path d="M3 8.500a2.300 2.300 0 0 1 0-4.500 3.200 3.200 0 0 1 6 .3A2 2 0 0 1 9.500 8.500z" fill="#cfe4fa" /></svg>
      <Fit w={14} t="29°C" className="ml-[5px]" />
      <Fit w={39} t="Rain showers" className="ml-[4px]" />
      <Chev className="ml-[8px] h-[4px] w-[6px] rotate-180" />
      <svg viewBox="0 0 9 7" className="ml-[5px] h-[6px] w-[8px] shrink-0"><path d="M2 1.500h6v4.500H2zM0 .5h3v3H0z" fill="#eee" /></svg>
      <svg viewBox="0 0 9 6" className="ml-[4px] h-[6px] w-[8px] shrink-0"><path d="M2 5.500A2 2 0 0 1 2 2a3 3 0 0 1 5 .5 1.600 1.600 0 0 1 .5 3z" fill="#1d8fe8" /></svg>
      <svg viewBox="0 0 9 8" className="ml-[4px] h-[7px] w-[8px] shrink-0" fill="none" stroke="#eee"><path d="M1.500 1h7v4.500h-7zM4 7.500h3M.5 3v4" /></svg>
      <svg viewBox="0 0 10 8" className="ml-[4px] h-[7px] w-[8px] shrink-0" fill="none" stroke="#eee"><path d="M.5 2.800H2L4 1v6L2 5.200H.5zM5.700 2.500v3M7.300 1.500q1 2.500 0 5M8.800.8q1.500 3 0 6.400" strokeWidth=".8" /></svg>
      <div className="ml-[4px] flex w-[26px] flex-col items-center gap-[3px] text-[6px]">
        <Fit w={20} t="1:02 PM" />
        <Fit w={26} t="7/15/2021" />
      </div>
      <svg viewBox="0 0 10 10" className="ml-[8px] h-[9px] w-[9px] shrink-0"><path d="M.5.5h9v6.500H8V9.500L5.500 7h-5z" fill="#fff" /><path d="M2 2.700h6M2 4.700h5" stroke="#333" strokeWidth=".8" /></svg>
    </div>
  );
}

function SharedScreen() {
  return (
    <div className="flex w-[938px] shrink-0 flex-col overflow-hidden font-['Open_Sans','Noto_Sans',sans-serif] text-[6.500px]">
      <PptTitle />
      <PptTabs />
      <Ribbon />
      <div className="flex h-[476px] shrink-0 overflow-hidden bg-[#666668]">
        <ThumbPane />
        <ScrollBar className="h-[475px] w-[7px]" top="h-[282px]" size="h-[179px]" arrows={false} />
        <div className="w-px shrink-0 bg-[#565658]" />
        <div className="relative ml-[21px] mt-[26px] h-[421px] w-[748px] shrink-0">
          <LeaveSlide />
          <svg viewBox="0 0 4 6" className="absolute left-[527px] top-[61px] h-[6px] w-[4px]"><path d="M1.500 0h1v3H4L2 6 0 3h1.500z" fill="#000" /></svg>
        </div>
        <ScrollBar className="ml-[20px] h-[476px] w-[8px]" top="h-[283px]" size="h-[20px]" arrows />
      </div>
      <StatusBar />
      <InnerTaskbar />
    </div>
  );
}

/* ---------- call controls ---------- */
function CallControls() {
  const cell = "flex h-[52px] w-[52px] shrink-0 items-center justify-center";
  const half = "bg-linear-to-b from-[#3c3c3c] from-54% to-[#2d2d2d] to-54%";
  return (
    <div className="absolute left-[310px] top-[498px] flex h-[52px] w-[676px] overflow-hidden rounded-[3px] shadow-[0_2px_10px_rgba(0,0,0,0.35)]">
      <div className="flex w-[87px] items-center border-r border-[#1c1c1c] bg-linear-to-r from-[#3f3f3f] to-[#474747] pl-[16px]">
        <Fit w={54} t="03:46:00" className="text-[14px] font-bold text-[#a8a6a4]" />
      </div>
      <div className="flex bg-linear-to-b from-[#3e3e3e] from-54% to-[#393939] to-54%">
        <div className={cell}>
          <svg viewBox="0 0 24 22" className="h-[22px] w-[24px]">
            <path d="M3 3h11.500q2.500 0 2.500 2.500v10q0 2.500-2.500 2.500H3Q1 18 1 15.500v-10Q1 3 3 3zM18 8.500l4-3q1-.5 1 .5v10q0 1-1 .5l-4-3z" fill="#fff" />
            <path d="m3 .5 20 20" stroke="#3c3c3c" strokeWidth="3" />
            <path d="m1.500.700 21 20.600" stroke="#fff" strokeWidth="1.300" />
          </svg>
        </div>
        <div className={cell}><MicOff className="h-[21px] w-[21px]" /></div>
        <div className={cell}>
          <svg viewBox="0 0 22 17" className="h-[17px] w-[22px]" fill="none" stroke="#fff" strokeWidth="1.300"><rect x=".8" y=".8" width="20.400" height="15.400" rx="2" /><path d="M11 13V4.500M7.500 7.800 11 4.300l3.500 3.500" /></svg>
        </div>
        <div className={cell}>
          <svg viewBox="0 0 20 6" className="h-[6px] w-[20px]" fill="#fff"><circle cx="3" cy="3" r="2.200" /><circle cx="10" cy="3" r="2.200" /><circle cx="17" cy="3" r="2.200" /></svg>
        </div>
      </div>
      <div className={"flex grow items-center " + half}>
        <div className={cell}>
          <svg viewBox="0 0 20 23" className="h-[22px] w-[19px]" fill="none" stroke="#fff" strokeWidth="1.300" strokeLinecap="round" strokeLinejoin="round">
            <path d="M3.200 12V5.800a1.500 1.500 0 0 1 3 0V3.800a1.500 1.500 0 0 1 3 0V2.500a1.500 1.500 0 0 1 3 0v1.500a1.400 1.400 0 0 1 2.800 0V12.500l1.600-1.400c1.300-1 2.800.3 2 1.600L15.500 18c-1.200 2.600-3 4-6 4-4 0-6.300-2.700-6.300-6.500zM6.200 5.800V11M9.200 4v6.500M12.200 4v6.500" />
          </svg>
        </div>
        <div className={cell}>
          <div className="flex h-[50px] w-[50px] items-center justify-center rounded-[3px] border-2 border-white bg-[#35334a]">
            <svg viewBox="0 0 22 22" className="h-[22px] w-[22px]" fill="none" stroke="#d8d6ea" strokeWidth="1.300" strokeLinecap="round" strokeLinejoin="round"><path d="M11.500 1a9.700 9.700 0 1 1-4.600 18.400L1 21l1.800-5A9.700 9.700 0 0 1 11.500 1zM8 9h7M8 13h4.500" /></svg>
          </div>
        </div>
        <div className={cell}>
          <svg viewBox="0 0 23 21" className="h-[20px] w-[22px]" fill="none" stroke="#fff" strokeWidth="1.300"><circle cx="8" cy="5" r="4.200" /><circle cx="17.700" cy="6.500" r="3" /><path d="M3.500 12.500h9q2 0 2 2c0 3.500-2.500 5.500-6.500 5.500s-6.500-2-6.500-5.500q0-2 2-2zM16.500 12.500h3.500q1.800 0 1.800 1.800c0 2.700-1.600 4.200-4.300 4.200-.8 0-1.500-.1-2-.3" /></svg>
        </div>
        <div className="h-full w-px bg-[#1f1f1f]" />
        <div className="ml-[16px] flex h-[32px] w-[140px] items-center justify-center rounded-[2px] border border-[#5e5e5e] bg-[#1f1f1f]">
          <Fit w={100} t="Request control" className="text-[13.500px] font-bold text-white" />
        </div>
      </div>
      <div className="flex w-[52px] items-center justify-center bg-[#9c2e40]">
        <svg viewBox="0 0 22 9" className="h-[9px] w-[22px]"><path d="M.6 6.500C.3 2.500 5 .3 11 .3s10.700 2.200 10.400 6.200c-.1 1.600-.7 2-2 1.900l-3-.4c-1.200-.2-1.600-.8-1.600-2V4.800c-2.300-.8-5.300-.8-7.600 0V6c0 1.200-.4 1.800-1.600 2l-3 .4c-1.300.1-1.900-.3-2-1.900z" fill="#fff" /></svg>
      </div>
    </div>
  );
}

/* ---------- participants ---------- */
const people = [
  { i: "DR", iw: 23, n: "Divya Rani (Guest)", w: 96, bg: "bg-[#3c3c3c]", av: "bg-[#f2d5d8] text-[#85323f]" },
  { i: "S", iw: 9, n: "Sanjeena (Guest)", w: 89, bg: "bg-[#404040]", av: "bg-[#dbe2d8] text-[#36461f]" },
  { i: "DJ", iw: 18, n: "Dani James (Guest)", w: 100, bg: "bg-[#383838]", av: "bg-[#fbddd6] text-[#8b3527]" },
  { i: "S", iw: 9, n: "Sriraksha (Guest)", w: 89, bg: "bg-[#3d3d3d]", av: "bg-[#d1ecdf] text-[#13613a]" },
  { i: "PP", iw: 20, n: "Pramod Kodi Parame...", w: 120, bg: "bg-[#373737]", av: "bg-[#fbddd6] text-[#8b3527]" },
  { i: "P", iw: 9, n: "pravallika (Guest)", w: 91, bg: "bg-[#323232]", av: "bg-[#d6d4e9] text-[#2c2459]" },
];
function Strip() {
  return (
    <div className="flex h-[94px] shrink-0 bg-[#1b1b1b] pl-[106px] font-['Open_Sans','Noto_Sans',sans-serif]">
      {people.map((p) => (
        <div key={p.n} className={"flex w-[180px] shrink-0 flex-col items-center pt-[25px] " + p.bg}>
          <div className={"flex h-[44px] w-[44px] shrink-0 items-center justify-center rounded-full text-[16.500px] font-semibold " + p.av}>
            <Fit w={p.iw} t={p.i} />
          </div>
          <div className="mt-[8px] flex h-[17px] items-center gap-[6.500px] self-start pl-[15px] text-[12px] leading-none text-white">
            <Fit w={p.w} t={p.n} />
            <MicOff className="h-[15px] w-[15px]" />
          </div>
        </div>
      ))}
      <div className="flex w-[180px] shrink-0 flex-col items-center bg-[radial-gradient(circle_at_50%_50%,#57568a_0%,#444258_45%,#3b3948_80%)] pt-[20px]">
        <div className="flex h-[54px] w-[54px] shrink-0 items-center justify-center rounded-full border-[3px] border-[#9ea2ff] bg-[#3a3950]">
          <div className="flex h-[44px] w-[44px] items-center justify-center rounded-full bg-[#cfe2d8] text-[16.500px] font-semibold text-[#1c4a35]"><Fit w={20} t="PP" /></div>
        </div>
        <div className="mt-[3px] flex h-[17px] items-center self-start pl-[15px] text-[12px] leading-none text-white"><Fit w={143} t="PASUPATHY, PRAVEEN (ui..." /></div>
      </div>
    </div>
  );
}

/* ---------- desktop taskbar ---------- */
function Taskbar() {
  const apps: { k: string; active?: boolean; line?: string; el: ReactNode }[] = [
    { k: "chrome", el: <Chrome className="h-[24px] w-[24px]" /> },
    { k: "files", line: "w-[40px]", el: <Folder className="h-[20px] w-[22px]" /> },
    { k: "teams", active: true, line: "w-[49px]", el: <Teams className="h-[22px] w-[24px]" /> },
    { k: "photos", line: "w-[40px]", el: <svg viewBox="0 0 22 22" className="h-[22px] w-[22px]"><defs><linearGradient id="sky" x1="0" y1="0" x2="1" y2="1"><stop offset="0" stopColor="#21b3ea" /><stop offset="1" stopColor="#3a86dd" /></linearGradient></defs><rect width="22" height="22" rx="1" fill="url(#sky)" /><circle cx="15" cy="5" r="2.200" fill="#fff" /><path d="m11 13 4-3q1-.5 2 0l5 5v7H11z" fill="#7f8fe0" /><path d="m0 15 6-6.500q1.500-1 3 0L22 21q0 1-1 1H1q-1 0-1-1z" fill="#153f80" /></svg> },
    { k: "chrome2", line: "w-[40px]", el: <div className="relative"><Chrome className="h-[24px] w-[24px]" /><span className="absolute -bottom-[1px] -right-[1px] h-[12px] w-[12px] rounded-full border border-[#31584a] bg-[radial-gradient(circle,#6f8f7c_15%,#173a2f_60%)]" /></div> },
    { k: "teams2", line: "w-[40px]", el: <div className="flex h-[24px] w-[24px] items-center justify-center rounded-full bg-white"><Teams className="h-[17px] w-[19px]" /></div> },
    { k: "calc", line: "w-[40px]", el: <svg viewBox="0 0 18 24" className="h-[24px] w-[18px]"><rect width="18" height="24" rx="1" fill="#5d6a75" /><rect x="2" y="2" width="14" height="4.500" fill="#43c8f2" /><path d="M2 8.500h4v3.600H2zM7 8.500h4v3.600H7zM12 8.500h4v3.600h-4zM2 13.200h4v3.600H2zM7 13.200h4v3.600H7zM2 18h4v3.700H2zM7 18h4v3.700H7z" fill="#d9dee2" /><path d="M12 13.200h4v8.500h-4z" fill="#114a8d" /></svg> },
  ];
  return (
    <div className="flex h-[40px] shrink-0 items-center bg-linear-to-r from-[#cfe8ef] via-[#d2e3ed] via-60% to-[#d6daea] font-['Open_Sans','Noto_Sans',sans-serif] text-black">
      <div className="flex w-[48px] justify-center"><WinLogo className="h-[16px] w-[16px]" /></div>
      <div className="flex w-[48px] justify-center"><TaskView className="h-[16px] w-[16px]" /></div>
      <div className="ml-[2px] flex h-full">
        {apps.map((a) => (
          <div key={a.k} className={"flex h-full w-[49px] flex-col items-center " + (a.active ? "bg-[#ecf4f7]" : "")}>
            <div className="flex grow items-center pt-[2px]">{a.el}</div>
            <div className={"flex h-[2px] justify-end bg-[#0078d7] " + (a.line ?? "w-0")}>{a.k === "photos" && <span className="h-full w-[8px] bg-[#6aaee0]" />}</div>
          </div>
        ))}
      </div>
      <div className="ml-auto flex h-full items-center">
        <svg viewBox="0 0 12 7" className="h-[7px] w-[12px]" fill="none" stroke="#000" strokeWidth="1.200"><path d="m.5 6.500 5.500-5.500 5.500 5.500" /></svg>
        <svg viewBox="0 0 12 16" className="ml-[11px] h-[16px] w-[12px]"><rect x="3" y="0" width="6.500" height="11" rx="1" fill="#000" /><path d="M.8 8v3.500q0 1.500 1.500 1.500h7.600q1.500 0 1.500-1.500V8M6.200 13v2.500M3.500 15.500h5.500" fill="none" stroke="#000" strokeWidth="1.100" /></svg>
        <svg viewBox="0 0 17 12" className="ml-[10px] h-[12px] w-[17px]" fill="none" stroke="#000" strokeWidth="1.100"><path d="M7 2.500h8v7.500H5.500V8M15.500 4.500h1v3.500h-1M2 0v2M5 0v2M.8 2h5.400v2.500L4.500 6h-2L.8 4.500zM3.500 6v3.500h2" /><path d="M7.500 4.500h6v3.800h-6z" fill="#000" stroke="none" /></svg>
        <svg viewBox="0 0 13 13" className="ml-[11px] h-[13px] w-[13px]" fill="none" stroke="#000" strokeWidth="1.100"><path d="M.5 10A12 12 0 0 1 12 1M2 12.500A10.500 10.500 0 0 1 12 4M5 12.500A8 8 0 0 1 12 7M8 12.500A5 5 0 0 1 12 9.700" /><circle cx="11.500" cy="11.800" r="1.200" fill="#000" stroke="none" /></svg>
        <svg viewBox="0 0 17 14" className="ml-[8px] h-[14px] w-[17px]" fill="none" stroke="#000" strokeWidth="1.100"><path d="M.8 5h2.500L6.800 1.500v11L3.300 9H.8z" /><path d="M9 5q1 2 0 4M11 3.500q2 3.500 0 7" /><path d="M13.500 1.800q3 5.200 0 10.400" stroke="#999" /></svg>
        <Fit w={23} t="ENG" className="ml-[9px] text-[12px]" />
        <div className="ml-[14px] flex w-[56px] flex-col items-center text-[12px] leading-[18px]">
          <Fit w={48} t="01:02 PM" />
          <Fit w={57} t="15-07-2021" />
        </div>
        <div className="relative ml-[19px] h-[18px] w-[16px]">
          <svg viewBox="0 0 16 16" className="h-[16px] w-[16px]"><path d="M0 0h16v12H7.500L4 15.500V12H0z" fill="#000" /><path d="M3 3.500h10M3 6h10M3 8.500h7" stroke="#dde4ee" strokeWidth="1" /></svg>
          <span className="absolute left-[8px] top-[7px] flex h-[16px] w-[16px] items-center justify-center rounded-full border border-[#777] bg-[#c9ccd3] text-[12px]">1</span>
        </div>
        <div className="ml-[20px] mr-[4px] h-full w-px bg-[#a9b0bf]" />
      </div>
    </div>
  );
}

export default function App() {
  return (
    <div className="flex h-[768px] w-[1366px] flex-col overflow-hidden bg-black">
      <div className="flex h-[48px] shrink-0 items-center justify-end bg-[#464775] pr-[16px]">
        <div className="h-px w-[12px] bg-white" />
        <svg viewBox="0 0 14 14" className="ml-[31px] h-[14px] w-[14px]" fill="none" stroke="#fff" strokeWidth="1.200"><path d="M.6 3.400h10v10H.6zM3.400 3.400V.6h10v10h-2.800" /></svg>
        <svg viewBox="0 0 12 12" className="ml-[31px] h-[12px] w-[12px]" fill="none" stroke="#fff" strokeWidth="1.200"><path d="m.5.500 11 11M11.500.5l-11 11" /></svg>
      </div>
      <div className="relative flex h-[586px] shrink-0">
        <div className="flex w-[214px] shrink-0 items-end justify-end pb-[17px] pr-[5px] font-['Open_Sans','Noto_Sans',sans-serif] text-[11.500px] font-semibold leading-[16px] text-white">
          <Fit w={178} t="PASUPATHY, PRAVEEN (uidn4603)" />
        </div>
        <SharedScreen />
        <div className="font-['Open_Sans','Noto_Sans',sans-serif]"><CallControls /></div>
      </div>
      <Strip />
      <Taskbar />
    </div>
  );
}
